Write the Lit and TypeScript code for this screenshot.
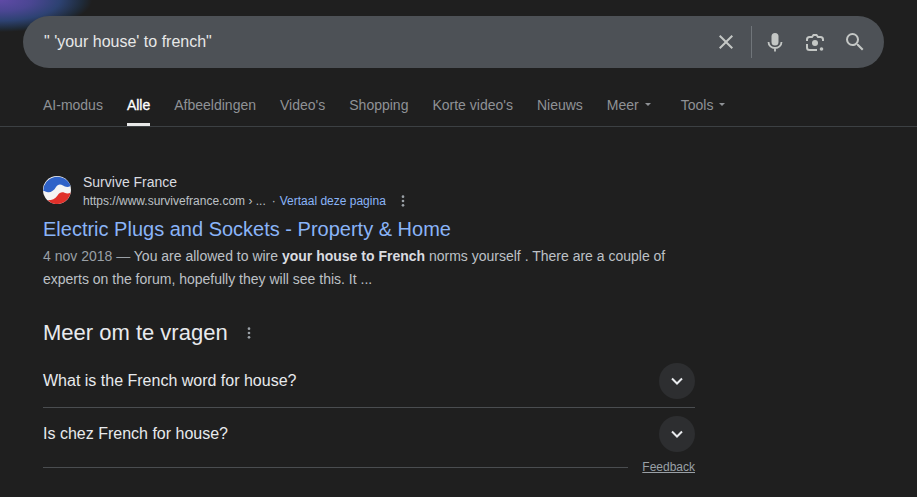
import { LitElement, html, css } from "lit";
import { customElement } from "lit/decorators.js";

const dots = html`<svg width="16" height="16" viewBox="0 0 24 24" fill="#9aa0a6"><circle cx="12" cy="5.5" r="2"/><circle cx="12" cy="12" r="2"/><circle cx="12" cy="18.5" r="2"/></svg>`;
const chev = html`<svg width="16" height="16" viewBox="0 0 16 16" fill="none" stroke="#e8eaed" stroke-width="2"><path d="M3 5.5 8 10.5 13 5.5"/></svg>`;

@customElement("app-root")
export class AppRoot extends LitElement {
  static styles = css`
    :host { display: block; width: 917px; height: 497px; overflow: hidden; position: relative; background: #1f1f1f; font-family: Arial, "Liberation Sans", sans-serif; color: #bfbfbf; }
    .glow { position: absolute; left: 0; top: 0; width: 110px; height: 40px; background: radial-gradient(ellipse 92px 32px at 0 0, #5f4aa6 0, #4a4692 35%, #2d4272 65%, #1f2a38 90%, rgba(31,31,31,0) 100%); }
    .top { position: relative; padding: 16px 33px 0 23px; }
    .search { height: 52px; border-radius: 26px; background: #4d5156; display: flex; align-items: center; padding: 0 17px 0 21px; }
    .q { flex: 1; font-size: 16px; color: #e8e8e8; margin-top: -1px; }
    .ic { display: flex; align-items: center; }
    .sp { width: 16px; }
    .sep { width: 1px; height: 32px; background: #70757a; margin: 0 11.5px 0 12.5px; }
    .tabs { display: flex; height: 58px; border-bottom: 1px solid #3c4043; margin: 0 -33px 0 -23px; padding-left: 43px; align-items: flex-start; gap: 24px; }
    .tab { font-size: 14px; color: #8f9296; padding-top: 28px; height: 58px; box-sizing: border-box; display: flex; align-items: flex-start; position: relative; line-height: 18px; }
    .tab.on { color: #fff; -webkit-text-stroke: 0.3px #fff; }
    .tab.on::after { content: ""; position: absolute; left: 0; right: 0; bottom: 0; height: 3px; background: #e8e8e8; }
    .tab.tools { margin-left: 6px; }
    .caret { width: 0; height: 0; border: 3.5px solid transparent; border-top-color: #8f9296; border-bottom: 0; margin: 7px 0 0 6px; }
    .main { padding: 46px 0 0 43px; width: 652px; }
    .site { display: flex; gap: 12px; }
    .fav { width: 28px; height: 28px; margin-top: 3px; flex: none; }
    .name { font-size: 14px; color: #dadce0; line-height: 18px; }
    .url { display: flex; align-items: center; font-size: 12px; color: #bdc1c6; line-height: 18px; white-space: nowrap; margin-top: 1px; }
    .sepdot { margin-left: 6px; }
    .trans { color: #8ab4f8; margin-left: 4px; }
    .url svg { margin-left: 9px; }
    h3 { margin: 6px 0 0; font-size: 20px; font-weight: 400; color: #8ab4f8; line-height: 26px; }
    .snip { margin-top: 3px; font-size: 14px; line-height: 23px; color: #bdc1c6; }
    .snip .d { color: #9aa0a6; }
    .snip b { color: #dadce0; }
    .paa { display: flex; align-items: center; margin-top: 28px; height: 28px; font-size: 22px; color: #e8eaed; gap: 13px; }
    .list { margin-top: 8px; }
    .q-row { display: flex; align-items: center; justify-content: space-between; height: 52px; font-size: 16px; color: #e8eaed; }
    .q-row.l { border-bottom: 1px solid #4a4d50; height: 53px; box-sizing: border-box; }
    .cb { width: 36px; height: 36px; border-radius: 50%; background: #2d2e30; display: flex; align-items: center; justify-content: center; }
    .fb { display: flex; align-items: center; gap: 14px; }
    .fb i { flex: 1; height: 1px; background: #4a4d50; }
    .fb span { font-size: 12px; color: #9aa0a6; text-decoration: underline; }
  `;

  render() {
    return html`
      <div class="glow"></div>
      <div class="top">
        <div class="search">
          <div class="q">" 'your house' to french"</div>
          <div class="ic">
            <svg width="24" height="24" viewBox="0 0 24 24" fill="#c4c7c5"><path d="M19 6.41 17.59 5 12 10.59 6.41 5 5 6.41 10.59 12 5 17.59 6.41 19 12 13.41 17.59 19 19 17.59 13.41 12z"/></svg>
            <div class="sep"></div>
            <svg width="24" height="24" viewBox="0 0 24 24"><rect x="8.5" y="3" width="7" height="12.5" rx="3.5" fill="#c4c7c5"/><path d="M5.5 12c0 3.600 3 6 6.500 6s6.500-2.400 6.500-6M12 18v3.500" fill="none" stroke="#c4c7c5" stroke-width="1.800"/></svg>
            <span class="sp"></span>
            <svg width="24" height="24" viewBox="0 0 24 24" fill="none" stroke="#c4c7c5" stroke-width="2"><path d="M4 11V9.500A2.500 2.500 0 0 1 6.500 7H9l1.500-2h3L15 7h2.500A2.500 2.500 0 0 1 20 9.500V11"/><path d="M4 14v3.500A2.500 2.500 0 0 0 6.500 20H14"/><circle cx="12" cy="13" r="3" fill="#c4c7c5" stroke="none"/><circle cx="18.500" cy="19" r="1.800" fill="#c4c7c5" stroke="none"/></svg>
            <span class="sp"></span>
            <svg width="24" height="24" viewBox="0 0 24 24" fill="#c4c7c5"><path d="M15.5 14h-.79l-.28-.27A6.470 6.470 0 0 0 16 9.500 6.500 6.500 0 1 0 9.500 16c1.610 0 3.090-.59 4.230-1.570l.27.280v.790l5 4.990L20.490 19zm-6 0C7.010 14 5 11.990 5 9.500S7.010 5 9.500 5 14 7.010 14 9.500 11.990 14 9.500 14z"/></svg>
          </div>
        </div>
        <div class="tabs">
          <div class="tab">AI-modus</div>
          <div class="tab on">Alle</div>
          <div class="tab">Afbeeldingen</div>
          <div class="tab">Video's</div>
          <div class="tab">Shopping</div>
          <div class="tab">Korte video's</div>
          <div class="tab">Nieuws</div>
          <div class="tab">Meer<span class="caret"></span></div>
          <div class="tab tools">Tools<span class="caret"></span></div>
        </div>
      </div>
      <div class="main">
        <div class="site">
          <svg class="fav" viewBox="0 0 28 28">
            <circle cx="14" cy="14" r="14" fill="#f4f4f4"/>
            <path d="M.3 15A14 14 0 0 1 27.500 10C25 11.500 22 11 20 9.500 17 7.500 14.500 8.500 13 11 11 15 7 17 4 16 2.500 15.500 1.300 15 .3 15z" fill="#2f62c8"/>
            <path d="M27.700 16.500A14 14 0 0 1 4.500 24.300C8.500 24.500 12 23 14.500 19.500 16.500 16.500 19 15.800 21.500 16.800 24 17.800 26 17.500 27.700 16.500z" fill="#e0302a"/>
          </svg>
          <div>
            <div class="name">Survive France</div>
            <div class="url"><span>https://www.survivefrance.com › ...</span><span class="sepdot">·</span><span class="trans">Vertaal deze pagina</span>${dots}</div>
          </div>
        </div>
        <h3>Electric Plugs and Sockets - Property &amp; Home</h3>
        <div class="snip"><span class="d">4 nov 2018 —</span> You are allowed to wire <b>your house to French</b> norms yourself . There are a couple of experts on the forum, hopefully they will see this. It ...</div>
        <div class="paa">Meer om te vragen ${dots}</div>
        <div class="list">
          <div class="q-row l">What is the French word for house?<div class="cb">${chev}</div></div>
          <div class="q-row">Is chez French for house?<div class="cb">${chev}</div></div>
        </div>
        <div class="fb"><i></i><span>Feedback</span></div>
      </div>
    `;
  }
}
